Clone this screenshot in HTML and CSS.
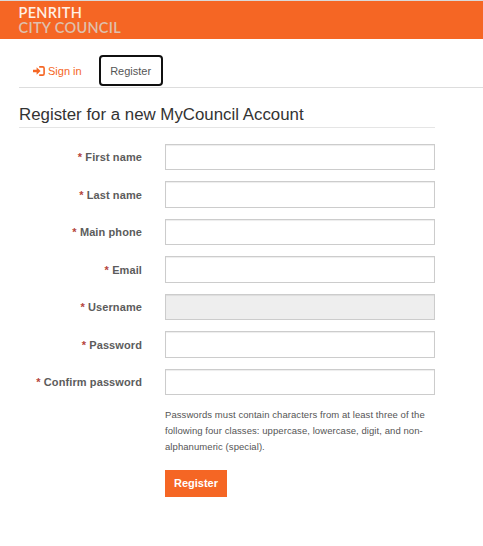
FILE: index.html
```
<!DOCTYPE html>
<html lang="en">
<head>
    <meta charset="UTF-8">
    <meta name="viewport" content="width=device-width, initial-scale=1.0">
    <title>Register - MyCouncil</title>
    <link rel="stylesheet" href="styles.css">
</head>
<body>
    <header class="header">
        <div class="logo">
            <span class="logo-top">PENRITH</span>
            <span class="logo-bottom">CITY COUNCIL</span>
        </div>
    </header>

    <main class="container">
        <nav class="tabs">
            <a class="tab" href="#">
                <svg class="icon" viewBox="0 0 12 10" width="12" height="10">
                    <path d="M0 3.7h3.6V1.2L7.6 5 3.6 8.8V6.3H0z" fill="currentColor"/>
                    <path d="M6.2 .9h3.5a1.4 1.4 0 0 1 1.4 1.4v5.4a1.4 1.4 0 0 1-1.4 1.4H6.2" fill="none" stroke="currentColor" stroke-width="1.6"/>
                </svg>
                <span>Sign in</span>
            </a>
            <a class="tab tab-active" href="#">Register</a>
        </nav>

        <form class="form">
            <h1 class="title">Register for a new MyCouncil Account</h1>

            <div class="form-row">
                <label class="label" for="firstname">First name</label>
                <input class="input" id="firstname" type="text">
            </div>
            <div class="form-row">
                <label class="label" for="lastname">Last name</label>
                <input class="input" id="lastname" type="text">
            </div>
            <div class="form-row">
                <label class="label" for="phone">Main phone</label>
                <input class="input" id="phone" type="text">
            </div>
            <div class="form-row">
                <label class="label" for="email">Email</label>
                <input class="input" id="email" type="text">
            </div>
            <div class="form-row">
                <label class="label" for="username">Username</label>
                <input class="input" id="username" type="text" disabled>
            </div>
            <div class="form-row">
                <label class="label" for="password">Password</label>
                <input class="input" id="password" type="password">
            </div>
            <div class="form-row">
                <label class="label" for="confirm">Confirm password</label>
                <input class="input" id="confirm" type="password">
            </div>

            <div class="form-footer">
                <p class="help">Passwords must contain characters from at least three of the following four classes: uppercase, lowercase, digit, and non-alphanumeric (special).</p>
                <button class="btn" type="button">Register</button>
            </div>
        </form>
    </main>
</body>
</html>
```

FILE: styles.css
```
* {
    box-sizing: border-box;
}

body {
    margin: 0;
    background: #fff;
    color: #555;
    font-family: "Liberation Sans", Arial, sans-serif;
    font-size: 11px;
}

/* Header */
.header {
    height: 39px;
    padding: 5px 0 0 18.5px;
    background: #f56624;
    border-top: 1px solid #d9d9d9;
}

.logo {
    font-family: Lato, sans-serif;
    font-size: 14.5px;
    font-weight: 600;
    letter-spacing: 0.3px;
    line-height: 14.5px;
}

.logo span {
    display: block;
}

.logo-top {
    color: #fff0e6;
}

.logo-bottom {
    color: #dfc0ad;
}

/* Tabs */
.container {
    padding-left: 19px;
}

.tabs {
    display: flex;
    align-items: center;
    gap: 17px;
    height: 49px;
    padding: 16px 0 1px 14px;
    border-bottom: 1px solid #ddd;
}

.tab {
    display: flex;
    align-items: center;
    gap: 3px;
    color: #f56624;
    text-decoration: none;
}

.tab-active {
    justify-content: center;
    width: 64px;
    height: 31px;
    border: 2px solid #101010;
    border-radius: 4px;
    color: #555;
}

/* Form */
.form {
    width: 416px;
}

.title {
    margin: 0 0 15.8px;
    padding-top: 17px;
    height: 40px;
    border-bottom: 1px solid #e5e5e5;
    color: #333;
    font-size: 16.85px;
    font-weight: normal;
    line-height: 20px;
}

.form-row {
    display: flex;
    align-items: center;
    justify-content: flex-end;
    height: 26.5px;
    margin-bottom: 11px;
}

.label {
    margin-right: 23px;
    color: #5c5c5c;
    font-weight: bold;
    letter-spacing: 0.1px;
}

.label::before {
    content: "* ";
    color: #b5443c;
}

.input {
    width: 270px;
    height: 26.5px;
    padding: 4px 9px;
    border: 1px solid #ccc;
    border-radius: 0;
    background: #fff;
    box-shadow: inset 0 1px 1px rgba(0, 0, 0, 0.075);
}

.input:disabled {
    background: #eee;
}

.form-footer {
    margin-left: 146px;
    padding-top: 0.7px;
}

.help {
    margin: 0 0 15px;
    font-size: 9.5px;
    letter-spacing: 0.07px;
    line-height: 16px;
}

.btn {
    width: 62px;
    height: 27px;
    padding: 0;
    border: 0;
    background: #f56624;
    color: #fff;
    font-family: inherit;
    font-size: 11px;
    font-weight: bold;
}
```
